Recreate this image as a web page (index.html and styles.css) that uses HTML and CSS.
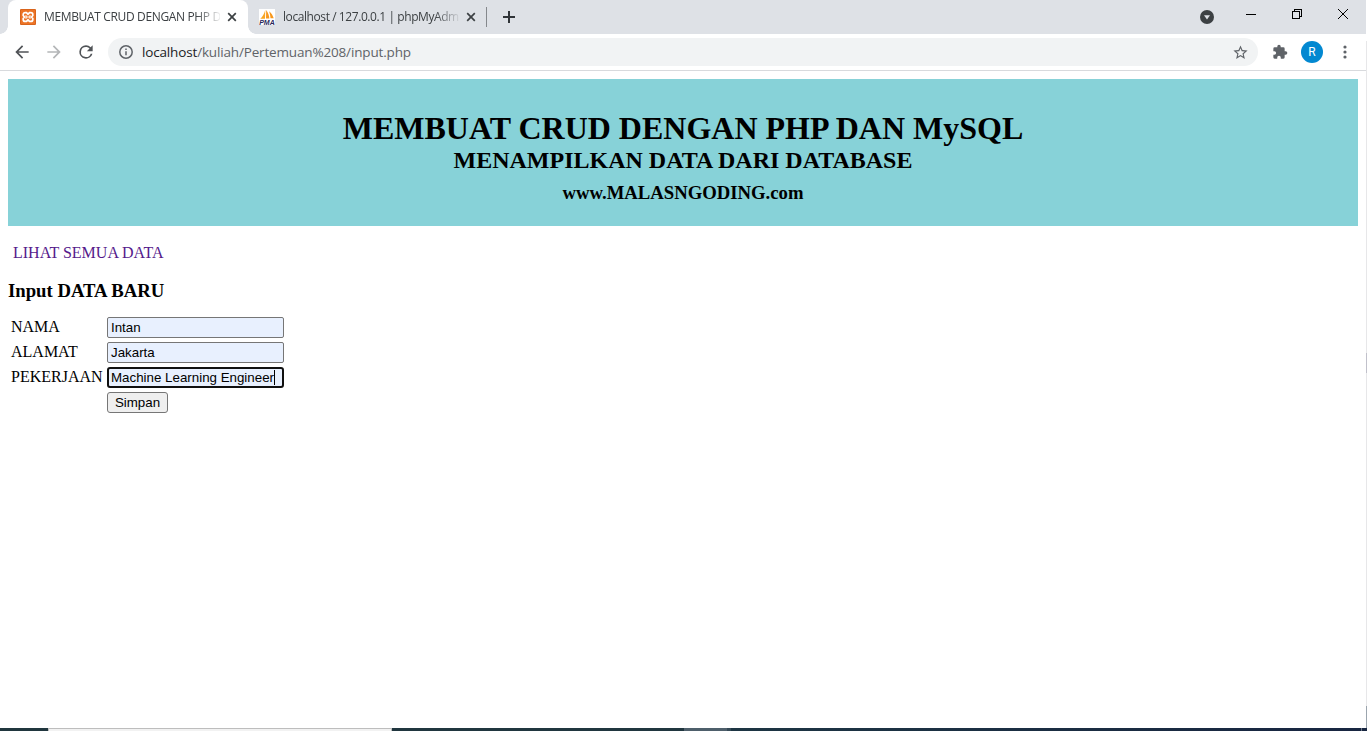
FILE: index.html
```html
<!DOCTYPE html>
<html lang="id">
<head>
<meta charset="utf-8">
<title>MEMBUAT CRUD DENGAN PHP DAN MySQL</title>
<link rel="stylesheet" href="styles.css">
</head>
<body>
<div class="window">
  <header class="tabstrip">
    <div class="tab tab-active">
      <svg class="favicon" viewBox="0 0 16 16"><rect width="16" height="16" rx="1" fill="#d9641c"/><rect x="1" y="1" width="14" height="14" fill="#ec7426"/><path d="M5.200 3.600h1.200L8 5.200l1.600-1.600h1.200a2 2 0 0 1 2 2v.8L11.600 8l1.200 1.600v.8a2 2 0 0 1-2 2H9.600L8 10.800l-1.600 1.600H5.200a2 2 0 0 1-2-2v-.8L4.400 8 3.200 6.400v-.8a2 2 0 0 1 2-2z" fill="none" stroke="#fff" stroke-width="1.700"/><path d="M5.500 8h5M6 6.300v3.400M10 6.300v3.400" stroke="#fff" stroke-width="1.200"/></svg>
      <span class="tab-title title-one">MEMBUAT CRUD DENGAN PHP D</span>
      <svg class="close" viewBox="0 0 10 10"><path d="M1.200 1.200l7.600 7.600M8.800 1.200L1.200 8.800"/></svg>
    </div>
    <div class="tab tab-idle">
      <svg class="favicon" viewBox="0 0 16 16"><rect width="16" height="16" fill="#fff"/><path d="M6.300.8L6 9.800H1.300C3.800 7.500 5.300 4.500 6.300.8z" fill="#f9a623"/><path d="M7.200 1c1.800 2.500 3 5.300 3.200 8.500H7zM10 2.200c2.500 2 4 4.500 4.700 7h-3.200C11.300 6.500 10.800 4 10 2.200z" fill="#f8981d"/><text class="pma" x="0.200" y="15.700" textLength="15.600" lengthAdjust="spacingAndGlyphs">PMA</text></svg>
      <span class="tab-title title-two">localhost / 127.0.0.1 | phpMyAdm</span>
      <svg class="close" viewBox="0 0 10 10"><path d="M1.200 1.200l7.600 7.600M8.800 1.200L1.200 8.800"/></svg>
      <i class="divider"></i>
    </div>
    <svg class="new-tab" viewBox="0 0 12 12"><path d="M6 0v12M0 6h12"/></svg>
    <div class="controls">
      <svg class="search-tabs" viewBox="0 0 14 14"><circle cx="7" cy="7" r="7" fill="#3c4043"/><path d="M4 5.200h6L7 9.400z" fill="#dee1e6"/></svg>
      <svg class="win-icon minimize" viewBox="0 0 12 12" shape-rendering="crispEdges"><path d="M1 6.500h10"/></svg>
      <svg class="win-icon restore" viewBox="0 0 12 12" shape-rendering="crispEdges"><path d="M1.500 3.500h7v7h-7zM3.500 3.500v-2h7v7h-2"/></svg>
      <svg class="win-icon shut" viewBox="0 0 12 12"><path d="M1 1l10 10M11 1L1 11"/></svg>
    </div>
  </header>

  <nav class="toolbar">
    <svg class="nav-icon" viewBox="0 0 24 24"><path d="M20 11H7.830l5.590-5.590L12 4l-8 8 8 8 1.410-1.410L7.830 13H20z"/></svg>
    <svg class="nav-icon disabled" viewBox="0 0 24 24"><path d="M12 4l-1.410 1.410L16.170 11H4v2h12.170l-5.580 5.590L12 20l8-8z"/></svg>
    <svg class="nav-icon" viewBox="0 0 24 24"><path d="M17.650 6.350A7.960 7.960 0 0 0 12 4a8 8 0 1 0 7.730 10h-2.080A6 6 0 1 1 12 6c1.660 0 3.140.69 4.220 1.780L13 11h7V4z"/></svg>
    <div class="omnibox">
      <svg class="info" viewBox="0 0 14 14"><circle cx="7" cy="7" r="6.200"/><path d="M7 6.200v4M7 3.500v1.500"/></svg>
      <span class="url"><b>localhost</b>/kuliah/Pertemuan%208/input.php</span>
      <svg class="star" viewBox="0 0 24 24"><path d="M22 9.240l-7.190-.62L12 2 9.190 8.630 2 9.240l5.460 4.730L5.820 21 12 17.270 18.180 21l-1.630-7.030zM12 15.400l-3.760 2.270 1-4.280-3.320-2.880 4.380-.38L12 6.100l1.710 4.040 4.380.38-3.320 2.880 1 4.280z"/></svg>
    </div>
    <svg class="puzzle" viewBox="0 0 24 24"><path d="M20.500 11H19V7a2 2 0 0 0-2-2h-4V3.500a2.500 2.500 0 0 0-5 0V5H4a2 2 0 0 0-1.990 2v3.800H3.500a2.700 2.700 0 0 1 0 5.400H2V20a2 2 0 0 0 2 2h3.800v-1.500a2.700 2.700 0 0 1 5.400 0V22H17a2 2 0 0 0 2-2v-4h1.500a2.500 2.500 0 0 0 0-5z"/></svg>
    <span class="avatar">R</span>
    <svg class="more" viewBox="0 0 4 14"><circle cx="2" cy="2" r="1.600"/><circle cx="2" cy="7" r="1.600"/><circle cx="2" cy="12" r="1.600"/></svg>
  </nav>

  <main class="page">
    <div class="banner">
      <h1>MEMBUAT CRUD DENGAN PHP DAN MySQL</h1>
      <h2>MENAMPILKAN DATA DARI DATABASE</h2>
      <h3>www.MALASNGODING.com</h3>
    </div>
    <a class="view-all">LIHAT SEMUA DATA</a>
    <h3 class="form-title">Input DATA BARU</h3>
    <form class="form">
      <label>NAMA</label><div class="field">Intan</div>
      <label>ALAMAT</label><div class="field">Jakarta</div>
      <label>PEKERJAAN</label><div class="field focused"><span>Machine Learning Engineer</span><i class="caret"></i></div>
      <span></span><button class="save" type="button">Simpan</button>
    </form>
  </main>

  <footer class="taskbar">
    <i class="task-start"></i><i class="task-search"></i><i class="task-mid"></i><i class="task-active"></i><i class="task-edge"></i><i class="task-tray"></i><i class="task-peek"></i><i class="task-end"></i>
  </footer>
  <div class="screen-edge"><i class="edge-mid"></i><i class="edge-low"></i></div>
</div>
</body>
</html>
```

FILE: styles.css
```css
* { box-sizing: border-box; }
body { margin: 0; background: #fff; overflow: hidden; }
svg, i { display: block; flex: none; }
.window {
  position: relative;
  display: flex;
  flex-direction: column;
  width: 1367px;
  height: 731px;
  font-family: "Liberation Serif", "Times New Roman", serif;
  color: #000;
}

/* Tab strip */
.tabstrip {
  display: flex;
  height: 34px;
  width: 1366px;
  flex: none;
  background: #dee1e6;
  font-family: "Open Sans", "Noto Sans", sans-serif;
}
.tab { display: flex; align-items: center; height: 34px; }
.tab-active {
  position: relative;
  width: 240px;
  margin-left: 8px;
  padding-left: 12px;
  background: #fff;
  border-radius: 8px 8px 0 0;
}
.tab-active::before, .tab-active::after {
  content: "";
  position: absolute;
  bottom: 0;
  width: 8px;
  height: 8px;
}
.tab-active::before { left: -8px; background: radial-gradient(circle at 0 0, #dee1e6 7.500px, #fff 8px); }
.tab-active::after { right: -8px; background: radial-gradient(circle at 100% 0, #dee1e6 7.500px, #fff 8px); }
.tab-idle { width: 239px; padding-left: 11px; }
.favicon { width: 16px; height: 16px; }
.pma { font: italic bold 7px "Liberation Sans", Arial, sans-serif; fill: #28285a; }
.tab-title {
  width: 176px;
  margin: 0 7px 0 8px;
  white-space: nowrap;
  font-size: 12px;
  line-height: 18px;
  color: #3c4043;
  -webkit-mask-image: linear-gradient(90deg, #000 152px, transparent 178px);
  mask-image: linear-gradient(90deg, #000 152px, transparent 178px);
}
.title-one { letter-spacing: -0.350px; }
.title-two { letter-spacing: -0.420px; }
.close { width: 10px; height: 10px; stroke: #3c4043; stroke-width: 1.700; }
.divider { width: 1px; height: 20px; margin-left: 10px; background: #85888c; }
.new-tab { width: 12px; height: 12px; margin: 11px 0 0 16px; stroke: #303438; stroke-width: 2; }
.controls { display: flex; margin-left: auto; }
.search-tabs { width: 14px; height: 14px; margin: 10px 31px 0 0; }
.win-icon { width: 12px; height: 12px; margin-top: 8px; fill: none; stroke: #000; stroke-width: 1; }
.restore { margin-left: 34px; }
.shut { margin: 8px 17px 0 34px; }

/* Toolbar */
.toolbar {
  display: flex;
  align-items: center;
  height: 37px;
  width: 1366px;
  flex: none;
  padding: 0 19px 0 12px;
  border-bottom: 1px solid #d8dadd;
}
.nav-icon { flex: none; width: 20px; height: 20px; margin-right: 12px; fill: #505357; }
.disabled { fill: #b4b6b8; }
.omnibox {
  display: flex;
  align-items: center;
  flex: none;
  width: 1150px;
  height: 28px;
  padding: 0 9px 0 11px;
  background: #f1f3f4;
  border-radius: 14px;
}
.info { width: 14px; height: 14px; fill: none; stroke: #5f6368; stroke-width: 1.500; }
.url {
  margin-left: 9px;
  font: 13.500px/20px "Open Sans", "Noto Sans", sans-serif;
  color: #5f6368;
  letter-spacing: -0.160px;
}
.url b { font-weight: 400; color: #202124; }
.star { width: 17px; height: 17px; margin-left: auto; fill: #5f6368; }
.puzzle { width: 16px; height: 16px; margin-left: 14px; fill: #5f6368; }
.avatar {
  display: grid;
  place-items: center;
  flex: none;
  width: 22px;
  height: 22px;
  margin-left: 13px;
  border-radius: 50%;
  background: #0288d1;
  color: #fff;
  font: 12px "Roboto", sans-serif;
}
.more { width: 4px; height: 14px; margin-left: auto; fill: #5f6368; }

/* Page content */
.page { flex: 1; min-height: 0; padding: 8px 9px 0 8px; }
.banner {
  height: 147px;
  padding-top: 31px;
  background: #87d2d8;
  text-align: center;
}
h1, h2, h3 { margin: 0; }
.banner h1 { font-size: 32px; line-height: 36px; }
.banner h2 { margin-top: 1px; font-size: 24px; line-height: 27px; }
.banner h3 { margin-top: 8px; font-size: 18.720px; line-height: 21px; }
.view-all {
  display: block;
  width: max-content;
  margin: 18px 0 0 5px;
  font-size: 16px;
  line-height: 18px;
  color: #551a8b;
}
.form-title { margin-top: 18px; font-size: 18.720px; line-height: 21px; }
.form {
  display: grid;
  grid-template-columns: 94px 177px;
  grid-auto-rows: 21px;
  gap: 4px 2px;
  margin: 16px 0 0 3px;
  font-size: 16px;
  line-height: 20px;
}
.field {
  display: flex;
  align-items: center;
  height: 21px;
  padding-left: 3px;
  background: #e8f0fe;
  border: 1px solid #767676;
  border-radius: 2px;
  font: 13.333px/15px "Liberation Sans", Arial, sans-serif;
  white-space: nowrap;
}
.focused { padding-left: 2px; border: 2px solid #101010; border-radius: 3px; }
.caret { width: 1px; height: 15px; background: #000; }
.save {
  width: 61px;
  height: 21px;
  padding: 0;
  background: #efefef;
  border: 1px solid #767676;
  border-radius: 3px;
  color: #000;
  font: 13.333px/15px "Liberation Sans", Arial, sans-serif;
}

/* Strip of the desktop taskbar */
.taskbar { display: flex; height: 3px; flex: none; background: #1c3442; }
.task-start { width: 48px; background: #20363e; }
.task-search { width: 344px; background: #f2f2f2; border: 1px solid #bdbdbd; border-bottom: 0; }
.task-mid { width: 292px; background: #20363f; }
.task-active { width: 43px; background: #4e5f6b; }
.task-edge { width: 4px; background: #344956; }
.task-tray { width: 630px; background: linear-gradient(90deg, #1d3543, #182641); }
.task-peek { width: 1px; background: #727b8b; }
.task-end { width: 5px; background: #182641; }

/* Sliver of the neighbouring window at the right */
.screen-edge {
  position: absolute;
  top: 41px;
  right: 0;
  display: flex;
  flex-direction: column;
  width: 1px;
  height: 687px;
  background: #e7e7e9;
}
.edge-mid { height: 20px; margin-top: 312px; background: #c1c1cb; }
.edge-low { height: 22px; margin-top: auto; background: #9ba5ae; }
```
